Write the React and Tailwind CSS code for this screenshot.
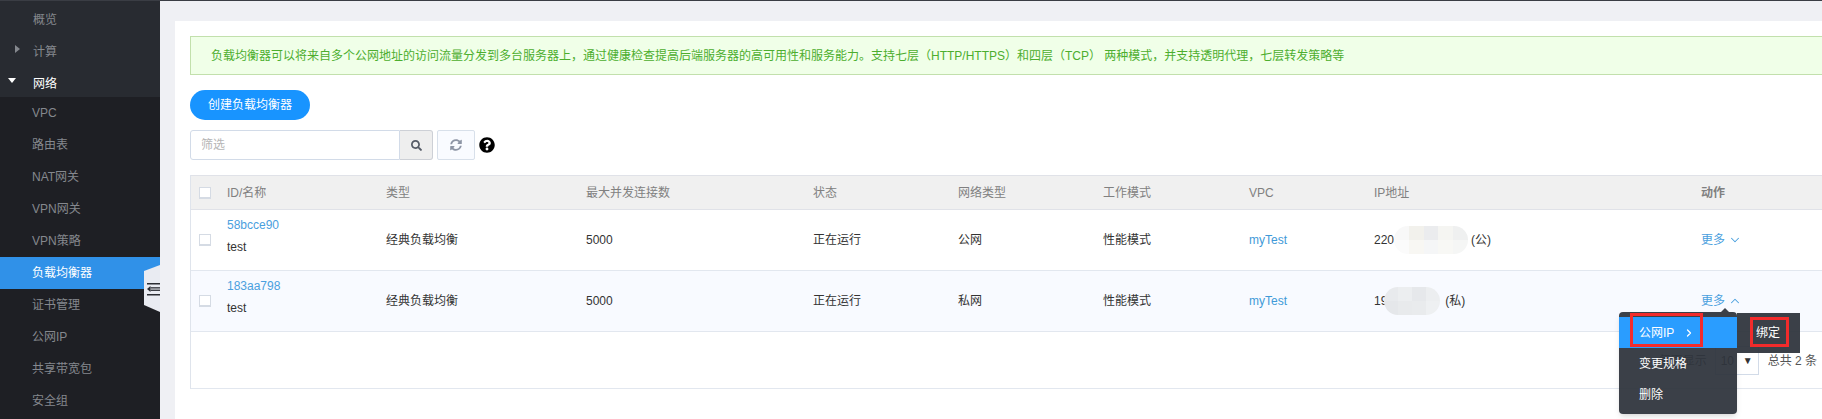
import React from "react";
import { FaSearch, FaSyncAlt, FaQuestionCircle } from "react-icons/fa";
import { ChevronDown, ChevronUp, ChevronRight } from "lucide-react";

const font = { fontFamily: '"Liberation Sans","Noto Sans CJK SC",sans-serif' };
const cols = "grid grid-cols-[36px_159px_200px_227px_145px_145px_146px_125px_327px_1fr] items-center";

function Nav({ children, active }) {
  return (
    <div className={`h-8 flex items-center pl-8 text-xs ${active ? "bg-[#3091e8] text-white" : "text-[#85888e]"}`}>
      {children}
    </div>
  );
}

function Check() {
  return <div className="w-3 h-3 ml-[8px] bg-white border border-[#d5dbe4] border-b-2" />;
}

function Blob({ cells, className }) {
  return (
    <div className={`relative flex h-7 rounded-[14px] overflow-hidden ${className}`}>
      {cells.map((c, i) => (
        <div key={i} className="flex-1 flex flex-col">
          <div className="flex-1" style={{ background: c[0] }} />
          <div className="flex-1" style={{ background: c[1] }} />
        </div>
      ))}
    </div>
  );
}

function Row({ id, net, ip, blob, tail, bg, open, tailClass }) {
  return (
    <div className={`${cols} h-[61px] border-b border-[#e2e7ef] text-xs text-[#333] ${bg}`}>
      <Check />
      <div className="flex flex-col gap-[7px] leading-[15px] pb-[7px]">
        <span className="text-[#4aa0de]">{id}</span>
        <span className="text-[#333]">test</span>
      </div>
      <span>经典负载均衡</span>
      <span>5000</span>
      <span>正在运行</span>
      <span>{net}</span>
      <span>性能模式</span>
      <span className="text-[#3f9ad8]">myTest</span>
      <div className="flex items-center">
        <span>{ip}</span>
        {blob}
        <span className={tailClass}>{tail}</span>
      </div>
      <div className="flex items-center gap-[3px] text-[#4aa0de]">
        <span>更多</span>
        {open ? <ChevronUp size={14} strokeWidth={1.8} /> : <ChevronDown size={14} strokeWidth={1.8} />}
      </div>
    </div>
  );
}

export default function App() {
  return (
    <div style={font} className="w-[1822px] h-[419px] overflow-hidden flex bg-[#eff0f4] border-t border-[#3a3d44]">
      <aside className="relative w-[160px] shrink-0 bg-[#1e1f24]">
        <div className="bg-[#282b31] h-[96px] pt-[3px] flex flex-col">
          <div className="h-8 flex items-center pl-[33px] text-xs text-[#85888e]">概览</div>
          <div className="h-8 flex items-center pl-[33px] text-xs text-[#85888e] relative">
            <span className="absolute left-[15px] top-[9px] w-0 h-0 border-y-[4px] border-y-transparent border-l-[5px] border-l-[#85888e]" />
            计算
          </div>
          <div className="h-[29px] pt-[2px] flex items-center pl-[33px] text-xs text-white relative">
            <span className="absolute left-[8px] top-[10px] w-0 h-0 border-x-[4px] border-x-transparent border-t-[5px] border-t-white" />
            网络
          </div>
        </div>
        <Nav>VPC</Nav>
        <Nav>路由表</Nav>
        <Nav>NAT网关</Nav>
        <Nav>VPN网关</Nav>
        <Nav>VPN策略</Nav>
        <Nav active>负载均衡器</Nav>
        <Nav>证书管理</Nav>
        <Nav>公网IP</Nav>
        <Nav>共享带宽包</Nav>
        <Nav>安全组</Nav>
        <div className="absolute left-[144px] top-[264px] w-4 h-[47px] bg-[#e9ebf2] [clip-path:polygon(100%_0,100%_100%,0_85%,0_13%)] flex items-center justify-end">
          <svg width="13" height="14" viewBox="0 0 13 14">
            <rect x="0" y="1" width="13" height="1.5" fill="#2b2d33" />
            <rect x="3.5" y="5.2" width="9.5" height="1.3" fill="#2b2d33" />
            <rect x="3.5" y="7.6" width="9.5" height="1.3" fill="#2b2d33" />
            <rect x="0" y="12" width="13" height="1.5" fill="#2b2d33" />
            <path d="M0 7 L3.5 4 V10 Z" fill="#2b2d33" />
          </svg>
        </div>
      </aside>

      <main className="flex-1 pl-[15px] pt-5 min-w-0">
        <div className="relative bg-white h-full pl-[15px] pt-[15px]">
          <div className="h-[39px] bg-[#f0ffe8] border border-[#c2e0ac] border-r-0 flex items-center pl-5 text-xs text-[#4cae2e] whitespace-nowrap">
            负载均衡器可以将来自多个公网地址的访问流量分发到多台服务器上，通过健康检查提高后端服务器的高可用性和服务能力。支持七层（HTTP/HTTPS）和四层（TCP） 两种模式，并支持透明代理，七层转发策略等
          </div>
          <button className="mt-[15px] block w-[120px] h-[30px] rounded-full bg-[#1894ff] text-white text-xs">创建负载均衡器</button>
          <div className="mt-[10px] flex items-center h-[30px]">
            <div className="w-[210px] h-full border border-[#d2dbe8] rounded-l-[3px] flex items-center pl-[10px] text-xs text-[#b5b5b5]">筛选</div>
            <div className="w-[33px] h-full bg-[#eeeeee] border border-l-0 border-[#cdd0d6] rounded-r-[3px] flex items-center justify-center text-[#555b66]">
              <FaSearch size={11} />
            </div>
            <div className="ml-[4px] w-[38px] h-full bg-[#f9fbff] border border-[#d8e0ea] rounded-[2px] flex items-center justify-center text-[#8d95a5]">
              <FaSyncAlt size={12} />
            </div>
            <FaQuestionCircle size={16} className="ml-[4px] text-black" />
          </div>
          <div className="mt-[15px] border-l border-[#dfe4ec]">
            <div className={`${cols} h-[35px] bg-[#f0f0f0] border-y border-[#e0e2e8] text-xs text-[#808080]`}>
              <Check />
              <span>ID/名称</span>
              <span>类型</span>
              <span>最大并发连接数</span>
              <span>状态</span>
              <span>网络类型</span>
              <span>工作模式</span>
              <span>VPC</span>
              <span>IP地址</span>
              <span className="font-bold">动作</span>
            </div>
            <Row
              id="58bcce90" net="公网" ip="220" tail="(公)" bg="bg-white" tailClass="ml-[3px]"
              blob={<Blob className="w-[74px]" cells={[["#f8f8f8","#fbfbfb"],["#f2f1ec","#f8f7f3"],["#ebecee","#f5f6f7"],["#f5f5f2","#f8f8f5"],["#eff0f0","#f5f6f5"]]} />}
            />
            <Row
              id="183aa798" net="私网" ip="19" tail="(私)" bg="bg-[#f8faff]" open tailClass="ml-[5px]"
              blob={<Blob className="w-[56px] -ml-[3px]" cells={[["#e8eaed","#e5e7ea"],["#eceef0","#e8eaec"],["#e6e8eb","#e9ebed"],["#eceef0","#eef0f2"]]} />}
            />
            <div className="h-[57px] border-b border-[#e2e7ef] flex items-center justify-end text-xs text-[#666] pt-[1px]">
              <span className="mr-[8px]">每页显示</span>
              <div className="w-[44px] h-[29px] border border-[#d2dbe8] flex items-center justify-between px-[5px] text-[#555]">
                <span>10</span>
                <span className="text-[10px] text-[#333]">▼</span>
              </div>
              <span className="ml-[9px] mr-[5px] text-[#555]">总共 2 条</span>
            </div>
          </div>

          <div className="absolute left-[1444px] top-[291px] w-[118px] h-[102px] pt-[5px] bg-[#2c323a]/93 rounded-[4px] shadow-md text-xs text-white">
            <div className="absolute left-[102px] -top-[4px] w-0 h-0 border-x-[4px] border-x-transparent border-b-[4px] border-b-[#3b4048]" />
            <div className="h-[31px] bg-[#2a9dff] flex items-center pl-[20px]">
              公网IP
              <ChevronRight size={12} strokeWidth={2.5} className="ml-[9px]" />
            </div>
            <div className="h-[31px] flex items-center pl-[20px]">变更规格</div>
            <div className="h-[31px] flex items-center pl-[20px]">删除</div>
            <div className="absolute left-[118px] top-[1px] w-[63px] h-[40px] bg-[#2c323a]/93 flex items-center pl-[19px]">绑定</div>
            <div className="absolute left-[11px] top-[1px] w-[73px] h-[34px] border-[3px] border-[#f22b2b]" />
            <div className="absolute left-[131px] top-[5px] w-[39px] h-[30px] border-[3px] border-[#f22b2b]" />
          </div>
        </div>
      </main>
    </div>
  );
}
